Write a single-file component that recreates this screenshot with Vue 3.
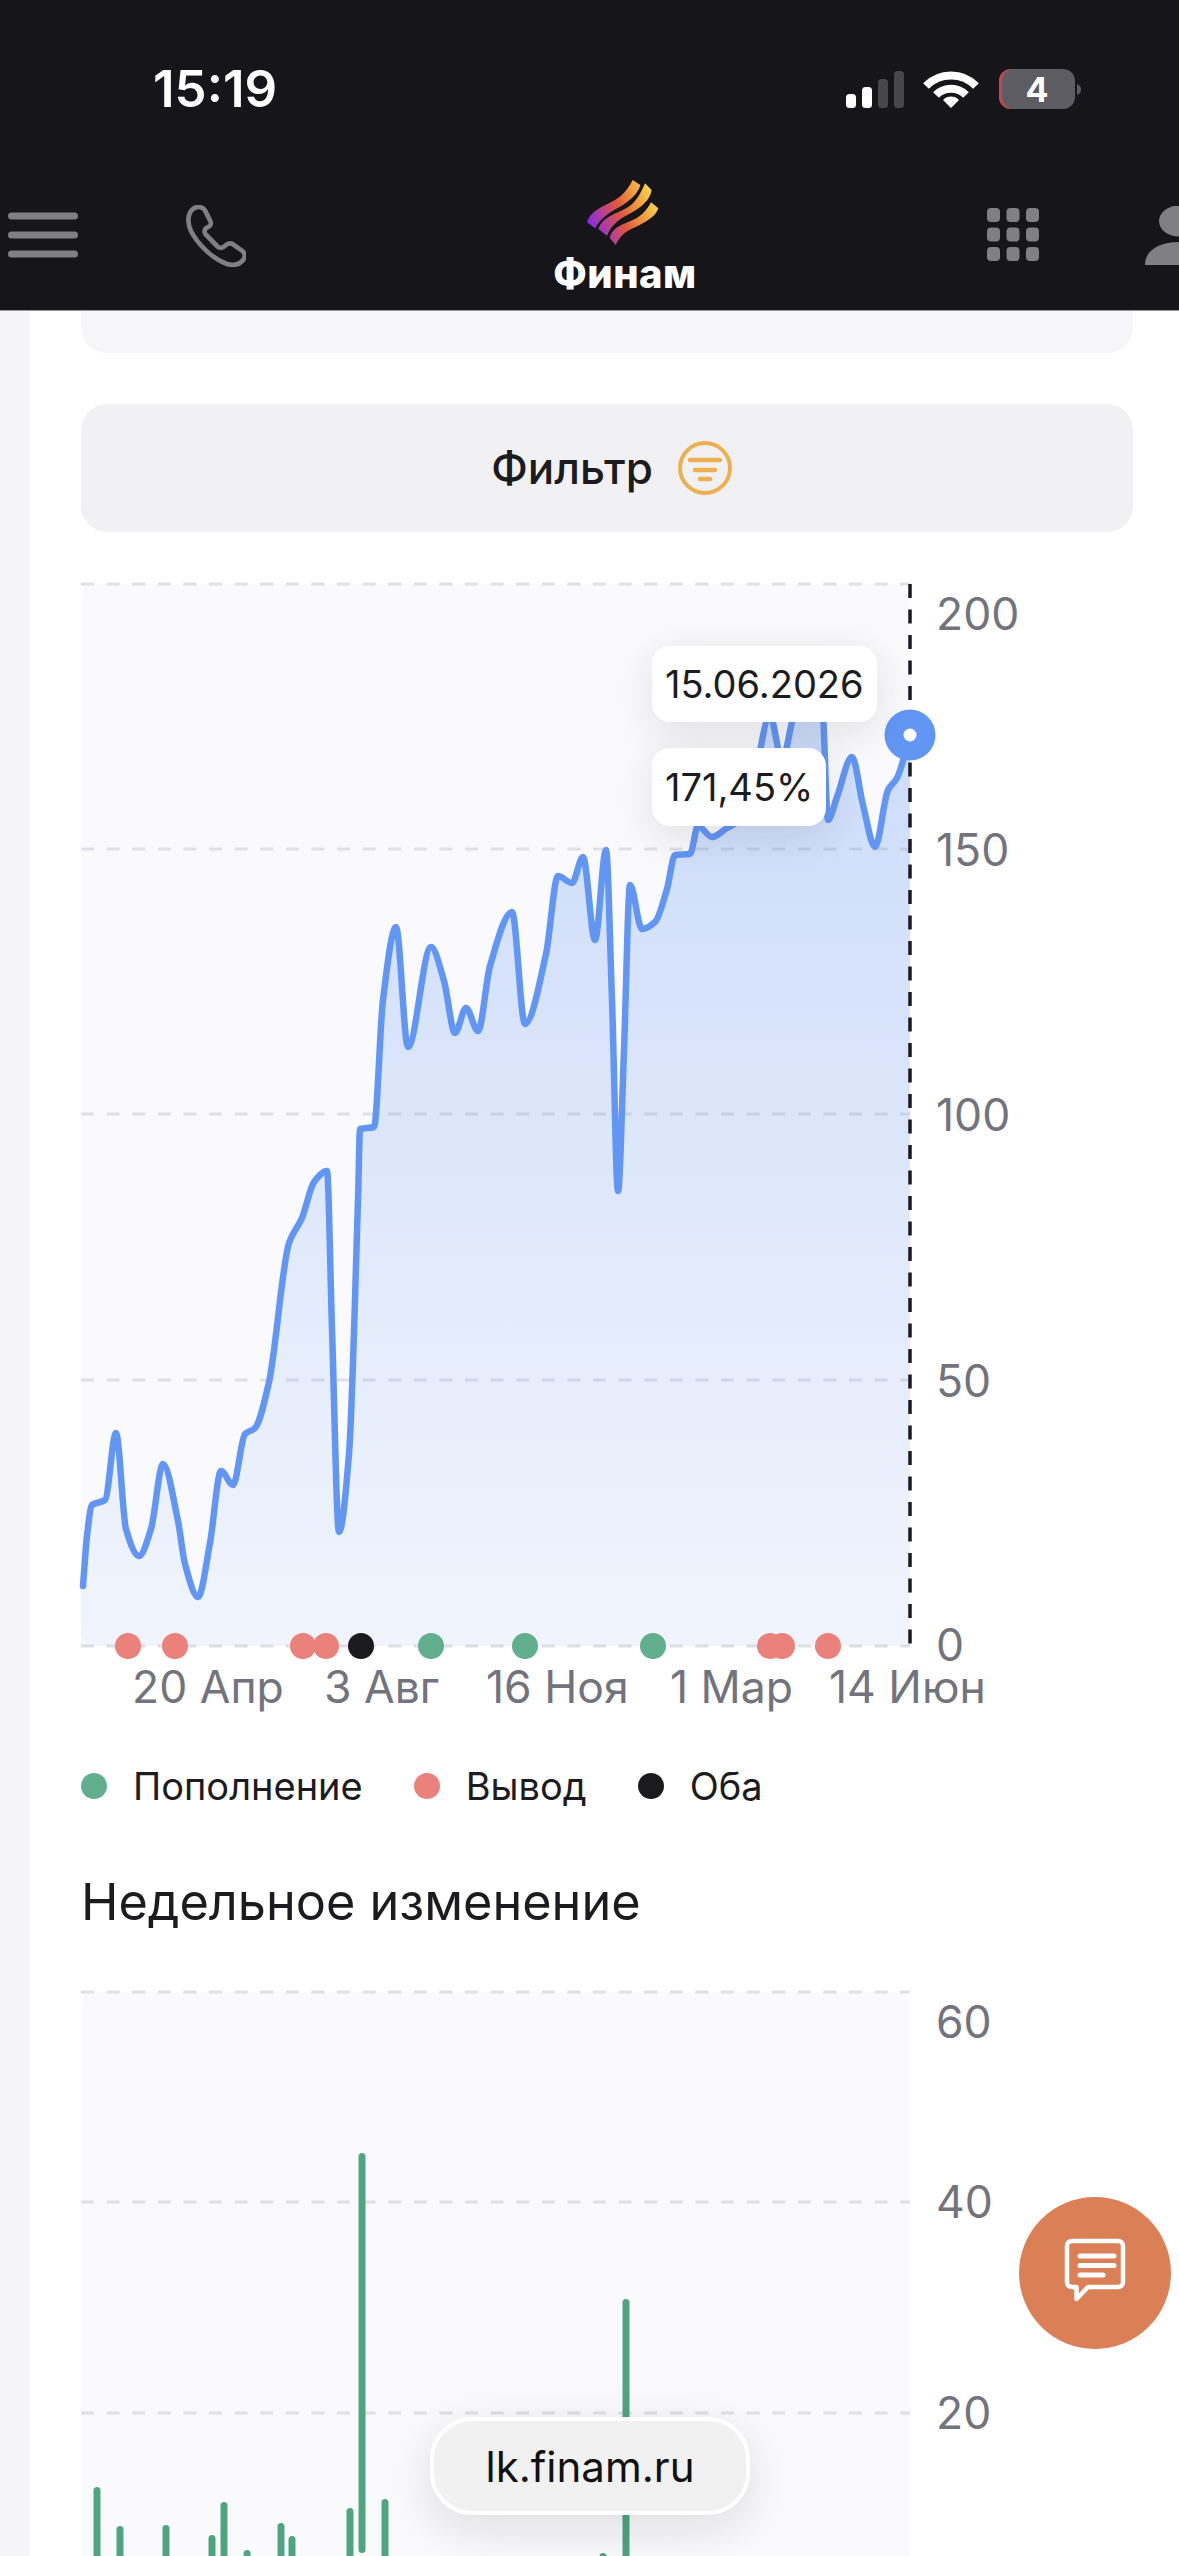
<template>
  <div class="page">
    <header class="top">
      <div class="status">
        <span class="time">15:19</span>
        <svg class="status-icons" width="236" height="42" viewBox="846 66 236 42">
          <rect x="846" y="92" width="10" height="14" rx="3.5" fill="#fff" />
          <rect x="862" y="85" width="10" height="21" rx="3.5" fill="#fff" />
          <rect x="878" y="77" width="10" height="29" rx="3.5" fill="#46464b" />
          <rect x="894" y="69" width="10" height="37" rx="3.5" fill="#46464b" />
          <path d="M926 84 A35 35 0 0 1 976 84" fill="none" stroke="#fff" stroke-width="8" />
          <path d="M936 93 A21 21 0 0 1 966 93" fill="none" stroke="#fff" stroke-width="8" />
          <path d="M943 98 A11 11 0 0 1 959 98 L951 106 Z" fill="#fff" />
          <rect x="999" y="67" width="76" height="40" rx="12" fill="#5c5c62" />
          <path d="M1011 67 A12 12 0 0 0 999 79 V95 A12 12 0 0 0 1011 107 A14 14 0 0 1 1002 95 V79 A14 14 0 0 1 1011 67 Z" fill="#c0484e" />
          <path d="M1077 82 C1080 83 1081 85 1081 87.5 C1081 90 1080 92 1077 93 Z" fill="#5c5c62" />
          <text class="battery-num" x="1037" y="100" text-anchor="middle">4</text>
        </svg>
      </div>
      <nav class="nav">
        <svg class="ic-menu" width="70" height="46" viewBox="0 0 70 46">
          <path d="M3.500 4H66.500M3.500 23H66.500M3.500 42H66.500" stroke="#7f7f84" stroke-width="7" stroke-linecap="round" />
        </svg>
        <svg class="ic-phone" width="60" height="62" viewBox="555 42 180 186">
          <path d="M575 55C590 42 605 48 612 58L628 90C632 98 628 106 618 110C610 114 608 122 614 130L648 165C654 172 664 172 670 166C678 158 686 154 696 160L722 178C734 186 734 200 724 210C712 222 694 224 676 218C636 204 590 160 570 120C558 94 560 68 575 55Z" fill="none" stroke="#7f7f84" stroke-width="14" stroke-linejoin="round" />
        </svg>
        <div class="logo">
          <svg width="200" height="100" viewBox="0 0 600 300">
            <defs>
              <linearGradient id="flame" gradientUnits="userSpaceOnUse" x1="205" y1="175" x2="405" y2="95">
                <stop offset="0" stop-color="#8b2be0" />
                <stop offset="0.45" stop-color="#e0553f" />
                <stop offset="0.72" stop-color="#f19a3e" />
                <stop offset="1" stop-color="#f6dc50" />
              </linearGradient>
            </defs>
            <path fill="url(#flame)" d="M198 172C212 128 262 122 300 92C316 78 326 62 335 45L358 60C350 88 326 108 296 126C266 142 240 158 222 190Z" />
            <path fill="url(#flame)" d="M232 192C246 150 296 146 330 120C350 104 362 78 372 55L392 75C388 104 362 126 330 144C300 160 272 176 258 212Z" />
            <path fill="url(#flame)" d="M266 218C276 180 320 176 352 156C370 144 382 128 390 112L412 130C404 156 372 172 344 186C316 198 298 210 284 240Z" />
          </svg>
          <span class="logo-text">Финам</span>
        </div>
        <svg class="ic-grid" width="52" height="53" viewBox="0 0 52 53">
          <template v-for="r in [0, 19.500, 39]" :key="r">
            <rect v-for="c in [0, 19.500, 39]" :key="c" :x="c" :y="r" width="13" height="14" rx="4" fill="#7f7f84" />
          </template>
        </svg>
        <svg class="ic-user" width="72" height="60" viewBox="0 0 72 60">
          <ellipse cx="34" cy="15" rx="20" ry="15.500" fill="#7f7f84" />
          <path d="M0 59C0 44 14 36 36 36C58 36 72 44 72 59Z" fill="#7f7f84" />
        </svg>
      </nav>
    </header>

    <main class="main">
      <div class="content">
        <div class="prev-card"></div>

        <button class="filter">
          <span>Фильтр</span>
          <svg width="56" height="56" viewBox="0 0 56 56">
            <circle cx="28" cy="28" r="25" fill="none" stroke="#edb04f" stroke-width="4" />
            <path d="M13 20H43M18 30H38M23 39H33" stroke="#edb04f" stroke-width="4.500" stroke-linecap="round" />
          </svg>
        </button>

        <div class="chart">
          <svg width="1052" height="1130" viewBox="81 584 1052 1130">
            <defs>
              <linearGradient id="area" gradientUnits="userSpaceOnUse" x1="0" y1="720" x2="0" y2="1646">
                <stop offset="0" stop-color="#6296f5" stop-opacity="0.3" />
                <stop offset="1" stop-color="#6296f5" stop-opacity="0.06" />
              </linearGradient>
            </defs>
            <rect x="81" y="584" width="829" height="1062" rx="14" fill="#fafafc" />
            <path v-for="y in grid" :key="y" class="grid" :d="`M81 ${y}H910`" />
            <path :d="areaPath" fill="url(#area)" />
            <path :d="linePath" class="line" />
            <path class="cursor" d="M910 584V1646" />
            <circle cx="910" cy="735" r="25.500" fill="#6296f5" />
            <circle cx="910" cy="735" r="6.500" fill="#fff" />
            <circle v-for="d in dots" :key="d.x" :cx="d.x" cy="1646" r="13" :fill="d.color" />
            <text v-for="l in yLabels" :key="l.t" class="axis" x="936" :y="l.y">{{ l.t }}</text>
            <text v-for="l in xLabels" :key="l.t" class="axis" :x="l.x" y="1703">{{ l.t }}</text>
          </svg>
          <div class="tips">
            <div class="tip tip-date">15.06.2026</div>
            <div class="tip tip-val">171,45%</div>
          </div>
        </div>

        <div class="legend">
          <div v-for="l in legend" :key="l.t" class="legend-item">
            <i :style="{ background: l.color }"></i>
            <span>{{ l.t }}</span>
          </div>
        </div>

        <h2 class="title">Недельное изменение</h2>

        <svg class="bars" width="1052" height="566" viewBox="81 1990 1052 566">
          <rect x="81" y="1992" width="829" height="600" rx="14" fill="#fafafc" />
          <path v-for="y in [1992, 2202, 2413]" :key="y" class="grid" :d="`M81 ${y}H910`" />
          <rect v-for="b in bars" :key="b.x" :x="b.x - 3.500" :y="b.y" width="7" height="400" rx="3.500" fill="#4fa57f" />
          <text class="axis" x="936" y="2038">60</text>
          <text class="axis" x="936" y="2218">40</text>
          <text class="axis" x="936" y="2429">20</text>
        </svg>
      </div>
    </main>

    <button class="fab">
      <svg width="72" height="72" viewBox="0 0 72 72">
        <path d="M13 4H59C62 4 64 6 64 9V45C64 48 62 50 59 50H29L17.500 62V50H13C10 50 8 48 8 45V9C8 6 10 4 13 4Z" fill="none" stroke="#fff" stroke-width="4.500" stroke-linejoin="round" />
        <path d="M21 19H55M21 28.500H55M21 38H44" stroke="#fff" stroke-width="5" stroke-linecap="round" />
      </svg>
    </button>

    <div class="url">lk.finam.ru</div>
  </div>
</template>

<script setup>
const grid = [584, 849, 1114, 1380, 1646]

const points = [
  [83, 1586], [87, 1536], [92, 1505], [105, 1500], [116, 1433], [126, 1529], [139, 1556], [151, 1529],
  [163, 1464], [178, 1521], [185, 1564], [198, 1597], [210, 1543], [221, 1471], [233, 1485], [245, 1434],
  [255, 1428], [269, 1382], [289, 1243], [302, 1218], [314, 1182], [327, 1171], [332, 1329], [339, 1532],
  [349, 1454], [358, 1200], [360, 1129], [374, 1127], [383, 1000], [396, 927], [408, 1047], [431, 947],
  [444, 981], [455, 1033], [466, 1008], [478, 1031], [490, 966], [512, 912], [525, 1024], [546, 954],
  [558, 876], [572, 883], [583, 857], [595, 940], [606, 850], [612, 1000], [618, 1191], [624, 1050],
  [630, 885], [642, 929], [655, 922], [667, 889], [675, 855], [690, 854], [698, 826], [712, 837],
  [727, 828], [740, 820], [752, 790], [770, 716], [782, 760], [795, 712], [815, 690], [822, 700],
  [828, 820], [837, 797], [852, 757], [863, 805], [875, 847], [888, 790], [897, 778], [903, 761], [910, 735],
]

// monotone x, как в графике оригинала
function monotone(pts) {
  const n = pts.length
  const m = new Array(n).fill(0)
  for (let i = 1; i < n - 1; i++) {
    const d0 = (pts[i][1] - pts[i - 1][1]) / (pts[i][0] - pts[i - 1][0])
    const d1 = (pts[i + 1][1] - pts[i][1]) / (pts[i + 1][0] - pts[i][0])
    m[i] = d0 * d1 <= 0 ? 0 : (2 * d0 * d1) / (d0 + d1)
  }
  m[0] = (pts[1][1] - pts[0][1]) / (pts[1][0] - pts[0][0])
  m[n - 1] = (pts[n - 1][1] - pts[n - 2][1]) / (pts[n - 1][0] - pts[n - 2][0])
  let d = `M${pts[0][0]} ${pts[0][1]}`
  for (let i = 0; i < n - 1; i++) {
    const h = (pts[i + 1][0] - pts[i][0]) / 3
    d += `C${pts[i][0] + h} ${pts[i][1] + m[i] * h} ${pts[i + 1][0] - h} ${pts[i + 1][1] - m[i + 1] * h} ${pts[i + 1][0]} ${pts[i + 1][1]}`
  }
  return d
}

const linePath = monotone(points)
const areaPath = linePath + 'L910 1646L81 1646L81 1590Z'

const red = '#eb817b'
const green = '#61af8e'
const black = '#1a1a1f'

const dots = [
  { x: 128, color: red }, { x: 175, color: red }, { x: 303, color: red }, { x: 326, color: red },
  { x: 361, color: black }, { x: 431, color: green }, { x: 525, color: green }, { x: 653, color: green },
  { x: 770, color: red }, { x: 782, color: red }, { x: 828, color: red },
]

const yLabels = [
  { t: '200', y: 630 }, { t: '150', y: 866 }, { t: '100', y: 1131 }, { t: '50', y: 1397 }, { t: '0', y: 1661 },
]

const xLabels = [
  { t: '20 Апр', x: 132 }, { t: '3 Авг', x: 324 }, { t: '16 Ноя', x: 486 }, { t: '1 Мар', x: 670 }, { t: '14 Июн', x: 829 },
]

const legend = [
  { t: 'Пополнение', color: green },
  { t: 'Вывод', color: red },
  { t: 'Оба', color: black },
]

const bars = [
  { x: 97, y: 2487 }, { x: 120, y: 2526 }, { x: 166, y: 2525 }, { x: 212, y: 2535 }, { x: 224, y: 2502 },
  { x: 247, y: 2550 }, { x: 281, y: 2523 }, { x: 292, y: 2536 }, { x: 350, y: 2508 }, { x: 362, y: 2153 },
  { x: 385, y: 2499 }, { x: 603, y: 2553 }, { x: 626, y: 2299 },
]
</script>

<style>
html, body {
  margin: 0;
  background: #fff;
}
</style>

<style scoped>
.page {
  position: relative;
  width: 1179px;
  height: 2556px;
  overflow: hidden;
  background: #fff;
  font-family: Inter, "Noto Sans", sans-serif;
  color: #1c1c20;
}

.top {
  height: 311px;
  box-sizing: border-box;
  background: #15151a;
  border-bottom: 1px solid #9a9a9e;
  overflow: hidden;
}

.status {
  height: 165px;
  box-sizing: border-box;
  padding: 12px 97px 0 153px;
  display: flex;
  align-items: center;
  justify-content: space-between;
}
.time {
  font-size: 51px;
  font-weight: 600;
  color: #fff;
  line-height: 1;
}
.status-icons {
  display: block;
}
.battery-num {
  font-size: 34px;
  font-weight: 700;
  fill: #fff;
}

.nav {
  display: flex;
  align-items: flex-start;
}
.nav svg {
  display: block;
  flex-shrink: 0;
}
.ic-menu {
  margin: 47px 0 0 8px;
}
.ic-phone {
  margin: 40px 0 0 108px;
}
.logo {
  margin-left: 275px;
  width: 200px;
  flex-shrink: 0;
}
.logo-text {
  display: block;
  margin-top: -6px;
  padding-left: 8px;
  font-size: 40px;
  font-weight: 800;
  line-height: 30px;
  letter-spacing: 0.5px;
  color: #fff;
  text-align: center;
}
.ic-grid {
  margin: 43px 0 0 266px;
}
.ic-user {
  margin: 41px 0 0 106px;
}

.main {
  display: flex;
  background: #fff;
  border-left: 30px solid #f5f5f7;
}
.content {
  width: 1052px;
  margin-left: 51px;
  flex-shrink: 0;
}

.prev-card {
  height: 42px;
  background: #f6f6f8;
  border-radius: 0 0 26px 26px;
}

.filter {
  display: flex;
  align-items: center;
  justify-content: center;
  gap: 24px;
  width: 100%;
  height: 128px;
  margin-top: 51px;
  padding: 0 0 0 10px;
  border: 0;
  border-radius: 26px;
  background: #f1f1f3;
  font-family: inherit;
  font-size: 44px;
  font-weight: 500;
  color: #1c1c20;
}

.chart {
  position: relative;
  margin-top: 52px;
  height: 1130px;
}
.chart svg,
.bars {
  display: block;
  overflow: visible;
}
.grid {
  fill: none;
  stroke: #dfdfe5;
  stroke-width: 3;
  stroke-dasharray: 13 12.600;
}
.line {
  fill: none;
  stroke: #6296f5;
  stroke-width: 6.500;
  stroke-linecap: round;
  stroke-linejoin: round;
}
.cursor {
  fill: none;
  stroke: #1a1a20;
  stroke-width: 3.500;
  stroke-dasharray: 14 11.500;
}
.axis {
  font-family: Inter, "Noto Sans", sans-serif;
  font-size: 44.5px;
  fill: #72737c;
}

.tips {
  position: absolute;
  left: 571px;
  top: 62px;
  display: flex;
  flex-direction: column;
  align-items: flex-start;
  gap: 26px;
}
.tip {
  display: flex;
  align-items: center;
  padding: 0 13px;
  border-radius: 18px;
  background: #fff;
  font-size: 38px;
  color: #1c1c20;
  box-shadow: 0 10px 44px rgba(30, 30, 50, 0.12);
}
.tip-date {
  height: 76px;
}
.tip-val {
  height: 78px;
}

.legend {
  display: flex;
  align-items: center;
  gap: 51px;
  margin-top: 42px;
  height: 60px;
}
.legend-item {
  display: flex;
  align-items: center;
  gap: 26px;
  font-size: 38px;
  line-height: 1;
}
.legend-item i {
  width: 26px;
  height: 26px;
  border-radius: 50%;
}

.title {
  margin: 56px 0 0;
  font-size: 50.4px;
  font-weight: 400;
  line-height: 60px;
}

.bars {
  margin-top: 58px;
}

.fab {
  position: absolute;
  left: 1019px;
  top: 2197px;
  width: 152px;
  height: 152px;
  padding: 0;
  border: 0;
  border-radius: 50%;
  background: #db7f56;
  display: flex;
  align-items: center;
  justify-content: center;
}

.url {
  position: absolute;
  left: 430px;
  top: 2417px;
  width: 320px;
  height: 98px;
  box-sizing: border-box;
  display: flex;
  align-items: center;
  justify-content: center;
  border: 4px solid #fff;
  border-radius: 42px;
  background: #f1f1f2;
  font-size: 42px;
  color: #111;
  box-shadow: 0 14px 50px rgba(20, 20, 30, 0.12);
}
</style>
